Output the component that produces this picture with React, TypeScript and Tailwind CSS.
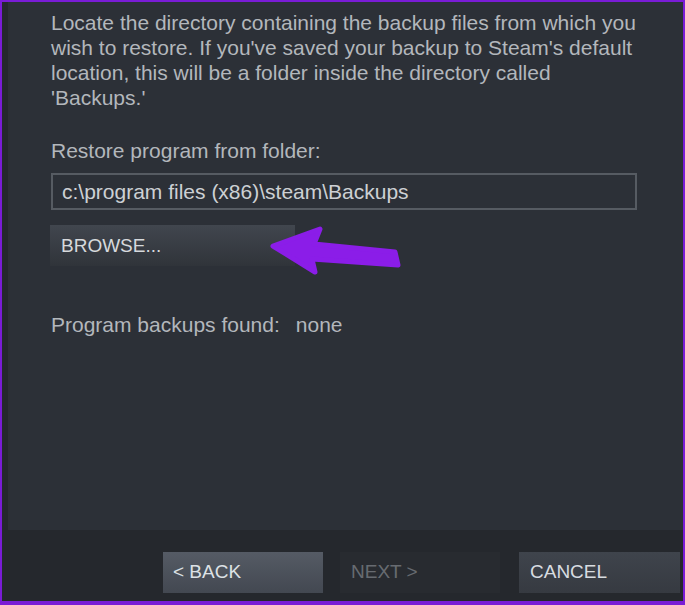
import React from 'react';

const font = { fontFamily: '"Liberation Sans", Arial, sans-serif' };

function Arrow() {
  return (
    <svg
      className="absolute left-[262px] top-[220px] pointer-events-none"
      width="145"
      height="58"
      viewBox="262 220 145 58"
    >
      <path
        d="M271 244 L318 227 L312 242 L393 250 L396 263 L310 257 L313 270 Z"
        fill="#8b1de8"
        stroke="#8b1de8"
        strokeWidth="5"
        strokeLinejoin="round"
      />
    </svg>
  );
}

export default function App() {
  return (
    <div
      style={font}
      className="relative w-[685px] h-[605px] flex flex-col bg-[#25282d] border-[#7a1cd6] border-t-2 border-l-2 border-r-2 border-b-4"
    >
      {/* Main panel */}
      <div className="ml-[6px] h-[528px] bg-[#2c3037] pl-[43px] pt-[8px] text-[21px] leading-[25px] text-[#b3b7bc]">
        <p className="whitespace-nowrap">
          Locate the directory containing the backup files from which you
          <br />
          wish to restore. If you've saved your backup to Steam's default
          <br />
          location, this will be a folder inside the directory called
          <br />
          'Backups.'
        </p>

        <div className="mt-[28px]">Restore program from folder:</div>

        <div className="mt-[10px] w-[586px] h-[37px] border-2 border-[#565b62] flex items-center pl-[9px] text-[#cdd0d4]">
          c:\program files (x86)\steam\Backups
        </div>

        <button className="mt-[15px] -ml-[1px] w-[245px] h-[41px] flex items-center pl-[11px] text-[19px] text-[#d6d9dc] bg-gradient-to-b from-[#41464e] to-[#30343a]">
          BROWSE...
        </button>

        <div className="mt-[46px] flex">
          <span>Program backups found:</span>
          <span className="ml-[16px]">none</span>
        </div>
      </div>

      {/* Footer buttons */}
      <div className="flex justify-end pt-[22px] pr-[3px] text-[19px]">
        <button className="w-[160px] h-[41px] flex items-center pl-[10px] text-[#dde1e5] bg-gradient-to-b from-[#555b65] to-[#434851]">
          &lt; BACK
        </button>
        <button className="ml-[17px] w-[160px] h-[41px] flex items-center pl-[11px] text-[#676b71] bg-[#282b30]">
          NEXT &gt;
        </button>
        <button className="ml-[19px] w-[161px] h-[41px] flex items-center pl-[11px] text-[#d8dce0] bg-gradient-to-b from-[#3f444c] to-[#363a41]">
          CANCEL
        </button>
      </div>

      <Arrow />
    </div>
  );
}
